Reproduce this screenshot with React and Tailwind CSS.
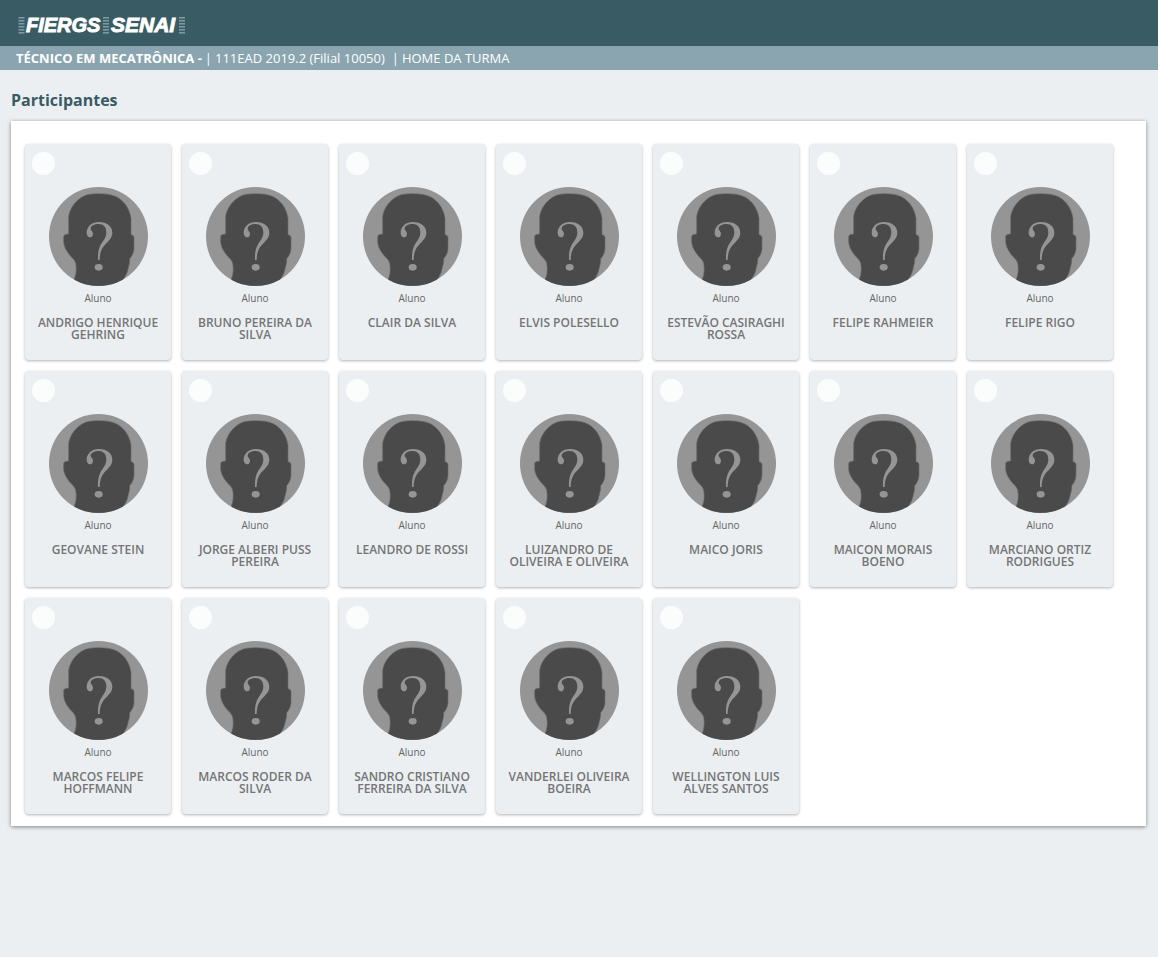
import React from "react";

const participants = [
  "ANDRIGO HENRIQUE GEHRING",
  "BRUNO PEREIRA DA SILVA",
  "CLAIR DA SILVA",
  "ELVIS POLESELLO",
  "ESTEVÃO CASIRAGHI ROSSA",
  "FELIPE RAHMEIER",
  "FELIPE RIGO",
  "GEOVANE STEIN",
  "JORGE ALBERI PUSS PEREIRA",
  "LEANDRO DE ROSSI",
  "LUIZANDRO DE OLIVEIRA E OLIVEIRA",
  "MAICO JORIS",
  "MAICON MORAIS BOENO",
  "MARCIANO ORTIZ RODRIGUES",
  "MARCOS FELIPE HOFFMANN",
  "MARCOS RODER DA SILVA",
  "SANDRO CRISTIANO FERREIRA DA SILVA",
  "VANDERLEI OLIVEIRA BOEIRA",
  "WELLINGTON LUIS ALVES SANTOS",
];

function Bars({ x }) {
  return (
    <g fill="#7f99a1">
      {[7, 10, 13, 16, 19, 22].map((y) => (
        <rect key={y} x={x} y={y} width="6" height="1.6" />
      ))}
    </g>
  );
}

function Logo() {
  return (
    <svg
      width="168"
      height="30"
      viewBox="0 0 168 30"
      role="img"
      aria-label="FIERGS SENAI"
    >
      <Bars x="0.5" />
      <Bars x="85" />
      <Bars x="161" />
      <g
        fill="#fff"
        stroke="#fff"
        strokeWidth="0.9"
        fontFamily="'Liberation Sans', Arial, sans-serif"
        fontWeight="700"
        fontStyle="italic"
      >
        <text x="8" y="22" fontSize="20">FIERGS</text>
        <text x="93" y="22" fontSize="21">SENAI</text>
      </g>
    </svg>
  );
}

function Avatar() {
  return (
    <svg
      className="size-[99px] rounded-full"
      viewBox="0 0 297 297"
      aria-hidden="true"
    >
      <rect width="297" height="297" fill="#959595" />
      <path
        d="M148 20 C168 20 184 22 194 26 C220 34 242 62 246 94 V143 C254 144 256 149 255 158 V184 C255 196 249 208 242 215 C243 228 239 236 237 246 C234 262 228 270 218 284 V297 H76 V276 C82 264 83 244 80 228 C75 214 66 211 58 199 C50 188 45 177 44 166 V148 C44 144 50 142 59 141 V88 C63 62 82 38 105 27 C114 22 130 20 148 20 Z"
        fill="#4a4a4a"
        stroke="#6a6a6a"
        strokeWidth="2"
      />
      <path
        d="M147 219 C146 190 152 177 162 163 C169 153 172 146 172 136 C172 120 163 111 149 111 C136 111 126 116 125 124 C124 130 132 132 132 140 C132 147 128 151 123 151 C117 151 113 145 113 137 C113 119 128 105 150 105 C174 105 190 118 190 137 C190 150 182 159 171 170 C158 183 153 194 152 219 Z"
        fill="#959595"
      />
      <ellipse cx="149" cy="241" rx="12" ry="10" fill="#959595" />
    </svg>
  );
}

function ParticipantCard({ name }) {
  return (
    <li className="relative flex h-[216px] w-[146px] flex-col items-center rounded-[4px] bg-[#ebeff2] px-2 pt-[43px] text-center shadow-[0_1px_3px_rgba(0,0,0,0.3)]">
      <input
        type="checkbox"
        aria-label={name}
        className="absolute top-2 left-[7px] size-[23px] appearance-none rounded-full bg-[#fbfdfd] checked:bg-[#395b64]"
      />
      <Avatar />
      <span className="mt-1 text-[10px] leading-4 text-[#666]">Aluno</span>
      <h2 className="mt-[11px] text-[12px] leading-3 font-semibold text-[#757575]">
        {name}
      </h2>
    </li>
  );
}

export default function App() {
  return (
    <div className="min-h-screen bg-[#ebeff2] font-['Open_Sans',sans-serif]">
      <header>
        <div className="flex h-[46px] items-center bg-[#395b64] px-[18px] pt-1">
          <a href="#inicio">
            <Logo />
          </a>
        </div>
        <nav className="flex h-6 items-center gap-[3px] bg-[#8aa5af] px-4 pt-px text-[13px] text-white">
          <strong className="font-bold">TÉCNICO EM MECATRÔNICA -</strong>
          <span>|</span>
          <a href="#turma">111EAD 2019.2 (Filial 10050)</a>
          <span className="ml-1">|</span>
          <a href="#home">HOME DA TURMA</a>
        </nav>
      </header>
      <main className="px-[11px] pt-[18px] pb-8">
        <h1 className="text-[16px] leading-6 font-bold text-[#395b64]">
          Participantes
        </h1>
        <ul className="mt-[9px] mr-px flex flex-wrap gap-[11px] bg-white px-[14px] pt-[23px] pb-3 shadow-[0_1px_4px_rgba(0,0,0,0.45)]">
          {participants.map((name) => (
            <ParticipantCard key={name} name={name} />
          ))}
        </ul>
      </main>
    </div>
  );
}
